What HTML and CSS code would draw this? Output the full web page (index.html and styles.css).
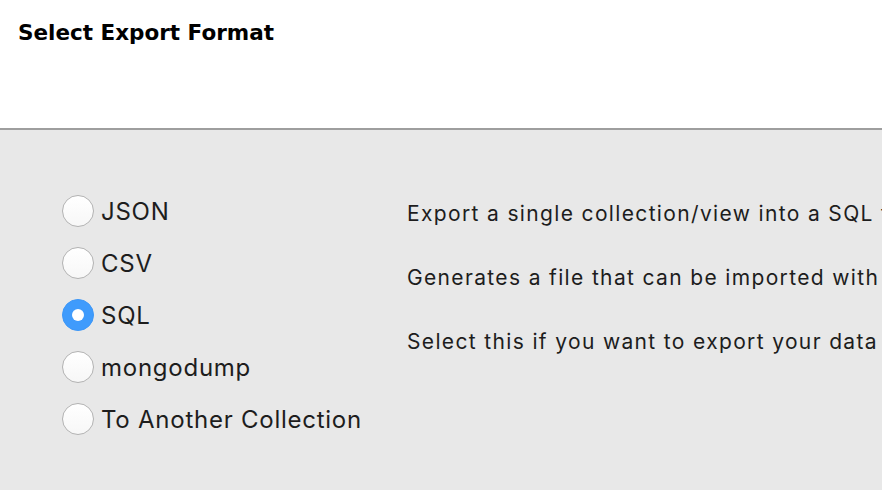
FILE: index.html
```html
<!DOCTYPE html>
<html lang="en">
<head>
    <meta charset="UTF-8">
    <title>Export</title>
    <link rel="stylesheet" href="styles.css">
</head>
<body>
    <div class="header">
        <h1 class="title">Select Export Format</h1>
    </div>
    <div class="panel">
        <div class="formats">
            <label class="option"><span class="radio"></span>JSON</label>
            <label class="option"><span class="radio"></span>CSV</label>
            <label class="option"><span class="radio checked"></span>SQL</label>
            <label class="option"><span class="radio"></span>mongodump</label>
            <label class="option"><span class="radio"></span>To Another Collection</label>
        </div>
        <div class="info">
            <p>Export a single collection/view into a SQL file</p>
            <p>Generates a file that can be imported with mysql</p>
            <p>Select this if you want to export your data to another SQL database</p>
        </div>
    </div>
</body>
</html>
```

FILE: styles.css
```css
body {
    margin: 0;
    height: 490px;
    overflow: hidden;
    display: flex;
    flex-direction: column;
    background-color: #e8e8e8;
}

.header {
    height: 130px;
    flex: none;
    box-sizing: border-box;
    background-color: #fff;
    border-bottom: 2px solid #9e9e9e;
    padding: 0 18px;
}

.title {
    margin: 0;
    padding-top: 20px;
    font-family: "DejaVu Sans", sans-serif;
    font-weight: bold;
    font-size: 21.5px;
    color: #000;
}

.panel {
    flex: 1;
    display: flex;
    padding: 55px 0 0 62px;
    overflow: hidden;
}

.formats {
    flex: none;
    width: 345px;
    display: flex;
    flex-direction: column;
}

.option {
    height: 52px;
    display: flex;
    align-items: center;
    gap: 7px;
    white-space: nowrap;
    font-family: Inter, "Liberation Sans", sans-serif;
    font-size: 24px;
    letter-spacing: 0.75px;
    color: #1d1d1d;
}

.radio {
    width: 30px;
    height: 30px;
    border-radius: 50%;
    border: 1px solid #b3b3b3;
    background: linear-gradient(#ffffff, #f7f7f7);
    flex: none;
    display: flex;
    align-items: center;
    justify-content: center;
}

.radio.checked {
    border-color: #3d97f7;
    background: #3f9bfc;
}

.radio.checked::after {
    content: "";
    width: 12px;
    height: 12px;
    border-radius: 50%;
    background: #fff;
}

.info {
    padding-top: 16px;
    display: flex;
    flex-direction: column;
    white-space: nowrap;
}

.info p {
    margin: 0;
    height: 64px;
    font-family: Inter, "Liberation Sans", sans-serif;
    font-size: 21px;
    letter-spacing: 1.35px;
    color: #1d1d1d;
}
```
